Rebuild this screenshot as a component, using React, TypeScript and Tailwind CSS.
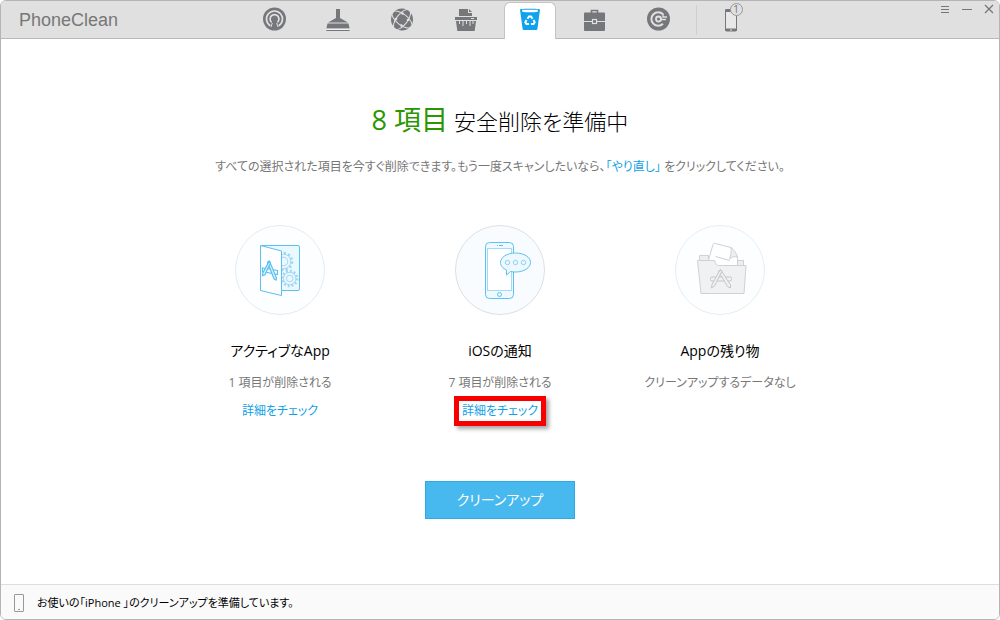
import type { ReactNode } from "react";
import clsx from "clsx";

type Category = {
  id: string;
  title: string;
  status: string;
  hasDetail: boolean;
  highlighted?: boolean;
  art: ReactNode;
};

type Tab = {
  id: string;
  label: string;
  icon: ReactNode;
};

const BAR = "#e0e0e0";

const tabs: Tab[] = [
  { id: "home", label: "ホーム", icon: <RadarIcon /> },
  { id: "quick", label: "クイッククリーン", icon: <BroomIcon /> },
  { id: "internet", label: "インターネットクリーン", icon: <GlobeIcon /> },
  { id: "privacy", label: "プライバシークリーン", icon: <ShredderIcon /> },
  { id: "system", label: "システムクリーン", icon: <BinIcon /> },
  { id: "toolbox", label: "ツールボックス", icon: <BriefcaseIcon /> },
  { id: "restore", label: "リストア", icon: <RestoreIcon /> },
];

const categories: Category[] = [
  {
    id: "active",
    title: "アクティブなApp",
    status: "1 項目が削除される",
    hasDetail: true,
    art: <ActiveAppArt />,
  },
  {
    id: "notifications",
    title: "iOSの通知",
    status: "7 項目が削除される",
    hasDetail: true,
    highlighted: true,
    art: <NotificationArt />,
  },
  {
    id: "leftovers",
    title: "Appの残り物",
    status: "クリーンアップするデータなし",
    hasDetail: false,
    art: <LeftoverArt />,
  },
];

export default function App() {
  return (
    <div className="flex min-h-screen flex-col overflow-hidden rounded-md border border-[#b4b4b4] bg-white font-['Open_Sans','Noto_Sans_CJK_JP',sans-serif] text-black [font-feature-settings:'palt']">
      <TitleBar activeTab="system" />

      <main className="flex flex-1 flex-col items-center pt-[61px]">
        <h1 className="flex items-baseline gap-1.5 text-[22px] leading-10 font-light">
          <span className="text-[27px] font-normal text-[#2a9600]">8 項目</span>
          安全削除を準備中
        </h1>
        <p className="mt-4 text-[12px] leading-5 text-[#777]">
          すべての選択された項目を今すぐ削除できます。もう一度スキャンしたいなら、
          <a href="#rescan" className="text-[#109fe8]">
            「やり直し」
          </a>{" "}
          をクリックしてください。
        </p>

        <div className="mt-12 grid w-full max-w-[660px] grid-cols-3">
          {categories.map((category) => (
            <CategoryColumn key={category.id} category={category} />
          ))}
        </div>

        <button
          type="button"
          className="mt-[60px] h-[38px] w-[150px] border border-[#2da9e8] bg-[#48b9ef] pb-0.5 text-[14px] text-white"
        >
          クリーンアップ
        </button>
      </main>

      <footer className="flex h-[35px] items-center gap-3 border-t border-[#dedede] bg-[#fafafa] px-3 pt-0.5 text-[11px]">
        <svg width="12" height="18" viewBox="0 0 12 18" fill="none" stroke="#999" aria-hidden="true">
          <rect x="1.5" y="0.5" width="9" height="17" rx="0.5" />
          <path d="M5 15.500h2" />
        </svg>
        お使いの「iPhone 」のクリーンアップを準備しています。
      </footer>
    </div>
  );
}

function TitleBar({ activeTab }: { activeTab: string }) {
  return (
    <header className="grid h-[38px] grid-cols-[1fr_auto_1fr] border-b border-[#b9b9b9] bg-[#e0e0e0] text-[#75777b]">
      <div className="self-center pl-[18px] font-['Liberation_Sans',sans-serif] text-[18px] leading-6 text-[#777]">
        PhoneClean
      </div>

      <nav className="flex items-end gap-3 pl-1">
        {tabs.map((tab) => (
          <button
            key={tab.id}
            type="button"
            aria-label={tab.label}
            className={clsx(
              "-mb-px flex h-[37px] w-[52px] items-start justify-center",
              tab.id === activeTab
                ? "rounded-t-md border border-b-0 border-[#c4c4c4] bg-white pt-1 text-[#0fa3ee]"
                : "pt-[5px]"
            )}
          >
            {tab.icon}
          </button>
        ))}
        <div className="flex items-center gap-2 self-center">
          <span className="h-[30px] w-px bg-[#cfcfcf]" />
          <button
            type="button"
            aria-label="接続中のデバイス"
            className="relative flex h-[30px] w-[52px] items-center justify-center"
          >
            <DeviceIcon />
            <span className="absolute -top-0.5 right-3.5 flex size-[13px] items-center justify-center rounded-full border border-[#999] bg-[#e0e0e0] text-[10px] leading-none text-[#777]">
              1
            </span>
          </button>
        </div>
      </nav>

      <div className="flex items-start justify-end gap-3 pt-[3px] pr-[5px]">
        <button type="button" aria-label="メニュー">
          <svg width="10" height="10" viewBox="0 0 10 10" stroke="currentColor">
            <path d="M1 2.500h8M1 5.500h8M1 8.500h8" />
          </svg>
        </button>
        <button type="button" aria-label="最小化">
          <svg width="10" height="10" viewBox="0 0 10 10" stroke="currentColor">
            <path d="M0 5.500h10" />
          </svg>
        </button>
        <button type="button" aria-label="閉じる">
          <svg width="10" height="10" viewBox="0 0 10 10" stroke="currentColor" strokeWidth="1.3">
            <path d="M1 1l8 8M9 1l-8 8" />
          </svg>
        </button>
      </div>
    </header>
  );
}

function CategoryColumn({ category }: { category: Category }) {
  return (
    <section className="flex flex-col items-center text-[12px] leading-5">
      {category.art}
      <h2 className="mt-6 text-[14px] leading-6">{category.title}</h2>
      <p className="mt-2.5 text-[#777]">{category.status}</p>
      {category.hasDetail ? (
        <div className="relative mt-2">
          <a href={`#${category.id}`} className="text-[#109fe8]">
            詳細をチェック
          </a>
          {category.highlighted ? (
            <span className="pointer-events-none absolute -inset-x-2 -top-[5px] -bottom-[5px] border-[5px] border-[#f90000] shadow-[3px_3px_4px_rgba(0,0,0,0.35)]" />
          ) : null}
        </div>
      ) : null}
    </section>
  );
}

function RadarIcon() {
  return (
    <svg width="24" height="24" viewBox="0 0 24 24">
      <circle cx="12.500" cy="12" r="11.500" fill="currentColor" />
      <g fill="none" stroke={BAR} strokeWidth="1.700">
        <path d="M8.300 18.800A8 8 0 1 1 16.700 18.800" />
        <path d="M9.600 15.300A4.400 4.400 0 1 1 15.400 15.300" />
      </g>
      <circle cx="12.500" cy="12" r="2.200" fill="currentColor" />
      <path d="M11 14.500h3l1.800 6H9.200z" fill="currentColor" />
      <path d="M10.300 16l-1.300 4M14.700 16l1.300 4" stroke={BAR} strokeWidth="1" />
    </svg>
  );
}

function BroomIcon() {
  return (
    <svg width="24" height="24" viewBox="0 0 24 24" fill="currentColor">
      <path d="M10 2h4v9l8 4.500H2L10 11z" />
      <path d="M1.500 16.500h21l1.200 5H.3z" />
      <path d="M.3 23h23.400v1H.3z" />
      <path d="M.3 21.800h23.400v1H.3z" fill="#f4f4f4" />
    </svg>
  );
}

function GlobeIcon() {
  return (
    <svg width="24" height="24" viewBox="0 0 24 24">
      <circle cx="12" cy="12.500" r="11" fill="currentColor" />
      <g fill="none" stroke={BAR} strokeWidth="1">
        <ellipse cx="12" cy="12.500" rx="12" ry="5.500" transform="rotate(38 12 12.500)" />
        <ellipse cx="12" cy="12.500" rx="12" ry="5.500" transform="rotate(-52 12 12.500)" />
      </g>
      <g fill={BAR}>
        <circle cx="12.500" cy="6.500" r="1.300" />
        <circle cx="18" cy="13" r="1.300" />
        <circle cx="11.500" cy="18.500" r="1.300" />
        <circle cx="6" cy="12" r="1.300" />
      </g>
    </svg>
  );
}

function ShredderIcon() {
  return (
    <svg width="24" height="24" viewBox="0 0 24 24" fill="currentColor">
      <path d="M5 2h9v4h4v3H5z" />
      <path d="M15 2l3 3h-3z" />
      <path d="M1 10h22v3H1z" />
      <path d="M17 11h3v1h-3z" fill={BAR} />
      <path d="M2 14h20l-1.300 10H3.300z" />
      <path d="M5.500 14v3M9 14v5M12.500 14v3M16 14v5M19 14v3" stroke={BAR} strokeWidth="1" />
    </svg>
  );
}

function BinIcon() {
  return (
    <svg width="24" height="24" viewBox="0 0 24 24">
      <path d="M2 2.500c0-1 20-1 20 0l-2.500 19c-.1 1-1 1.500-2 1.500h-11c-1 0-1.900-.5-2-1.500z" fill="currentColor" />
      <path d="M4 2.800h16l-.3 2c-4 .7-11.400.7-15.400 0z" fill="#fff" />
      <g fill="none" stroke="#fff" strokeWidth="2">
        <path d="M9.500 11.700l1.500-2.200h2l1.500 2.200" />
        <path d="M15.500 12.900l1.200 2.200-1.200 1.900h-2.600" />
        <path d="M11 17H8.500l-1.200-1.900 1.200-2.200" />
      </g>
    </svg>
  );
}

function BriefcaseIcon() {
  return (
    <svg width="24" height="24" viewBox="0 0 24 24">
      <path d="M9.500 6.500V3.500h6v3" fill="none" stroke="currentColor" strokeWidth="1.600" />
      <rect x="2" y="5.500" width="21" height="18.500" rx="1" fill="currentColor" />
      <path d="M2 14.500h21" stroke={BAR} />
      <rect x="10.500" y="12.500" width="4" height="4" fill="currentColor" stroke={BAR} strokeWidth="1.200" />
    </svg>
  );
}

function RestoreIcon() {
  return (
    <svg width="24" height="24" viewBox="0 0 24 24">
      <circle cx="12.500" cy="12" r="11.500" fill="currentColor" />
      <path d="M17 7.200a6.800 6.800 0 1 0 0 9.600" fill="none" stroke={BAR} strokeWidth="2" />
      <path d="M17 6.500v3.500h4" fill="none" stroke={BAR} strokeWidth="1.400" />
      <circle cx="12.500" cy="12" r="2.500" fill="none" stroke={BAR} strokeWidth="1.900" />
      <path d="M15 12.500h5" stroke={BAR} strokeWidth="1.600" />
    </svg>
  );
}

function DeviceIcon() {
  return (
    <svg width="14" height="24" viewBox="0 0 14 24">
      <rect x="1.500" y="1.500" width="11" height="21.500" rx="1" fill="#e8e8e8" stroke="currentColor" />
      <path d="M1 1.500h12v2.500H1zM1 20.500h12V23H1z" fill="currentColor" />
      <path d="M6 22h2" stroke={BAR} />
    </svg>
  );
}

function ActiveAppArt() {
  return (
    <svg width="90" height="90" viewBox="0 0 90 90" fill="none" stroke="#5cc0f0" aria-hidden="true">
      <circle cx="45" cy="45" r="44.500" fill="#fcfeff" stroke="#e4ebef" />
      <rect x="25.500" y="20.500" width="39" height="45" rx="1.500" fill="#eaf8ff" />
      <g stroke="#9fd6f2">
        <circle cx="48.500" cy="36.500" r="8.500" strokeWidth="2.500" strokeDasharray="2.200 2.250" />
        <circle cx="48.500" cy="36.500" r="7.300" fill="#eaf8ff" />
        <circle cx="48.500" cy="36.500" r="4.300" />
        <circle cx="54.700" cy="53.500" r="7.500" strokeWidth="2.500" strokeDasharray="1.900 2.027" />
        <circle cx="54.700" cy="53.500" r="6.200" fill="#eaf8ff" />
        <circle cx="54.700" cy="53.500" r="3.300" />
      </g>
      <path d="M25.500 20.500L46.500 26v44.500l-21-5z" fill="#fff" strokeLinejoin="round" />
      <g strokeWidth="1.200">
        <path d="M27.500 43l15 2.500v4l-15-3z" />
        <path d="M32.500 37l2-1 7 17-.5 2-2-1.200z" fill="#d8f1fd" />
        <path d="M34 36.500l1.500 1.200-5.500 12-2.500 1 .2-2.500z" fill="#d8f1fd" />
      </g>
    </svg>
  );
}

function NotificationArt() {
  return (
    <svg width="90" height="90" viewBox="0 0 90 90" fill="none" stroke="#5cc0f0" aria-hidden="true">
      <circle cx="45" cy="45" r="44.500" fill="#f8fcff" stroke="#dcdfe1" />
      <rect x="30.500" y="17.500" width="28" height="56" rx="4" fill="#eef9ff" />
      <rect x="32.500" y="23.500" width="24" height="42" fill="#fff" stroke="#a5daf5" />
      <path d="M42 20.500h1M44 20.500h4" />
      <circle cx="44.500" cy="69.500" r="2" />
      <path
        d="M60.500 28c8.500 0 15 4.200 15 9.500s-6.500 9.500-15 9.500c-1.800 0-3.500-.2-5-.5l-4 3.500v-5c-3.800-1.700-6-4.400-6-7.500 0-5.300 6.500-9.500 15-9.500z"
        fill="#eef9ff"
      />
      <g stroke="#8dd0f3">
        <circle cx="52.500" cy="37.500" r="2.200" />
        <circle cx="60.500" cy="37.500" r="2.200" />
        <circle cx="68.500" cy="37.500" r="2.200" />
      </g>
    </svg>
  );
}

function LeftoverArt() {
  return (
    <svg width="90" height="90" viewBox="0 0 90 90" fill="none" stroke="#cfd1d3" strokeLinejoin="round" aria-hidden="true">
      <circle cx="45" cy="45" r="44.500" fill="#fcfeff" stroke="#e6edf1" />
      <path d="M24.500 36v-5.500h9V36M62 41v-5.500h6.500V41" fill="#edeef0" />
      <path d="M33 37l5-17.500c.3-1 1-1.300 2-1l16 4 6.500 9.500v10H38z" fill="#fff" />
      <path d="M56 22.500c.5 4 0 8-1.500 11.500 2-2 5-3 8-2-1-4-3.500-7-6.500-9.500z" fill="#edeef0" />
      <path d="M40.500 31.500l14.500 4" />
      <path d="M22.500 35.500h17c1 3 2 5 4 5h27.500L69 68.500H26z" fill="#f0f1f2" />
      <g stroke="#c4c6c8">
        <rect x="35.500" y="52" width="21" height="4" rx="1.500" />
        <path d="M43.500 46l2-1.500L55.500 60v3l-3-1.500z" fill="#f0f1f2" />
        <path d="M45 45l2 1-7.500 15-3 2 .5-3.500z" fill="#f0f1f2" />
      </g>
    </svg>
  );
}
